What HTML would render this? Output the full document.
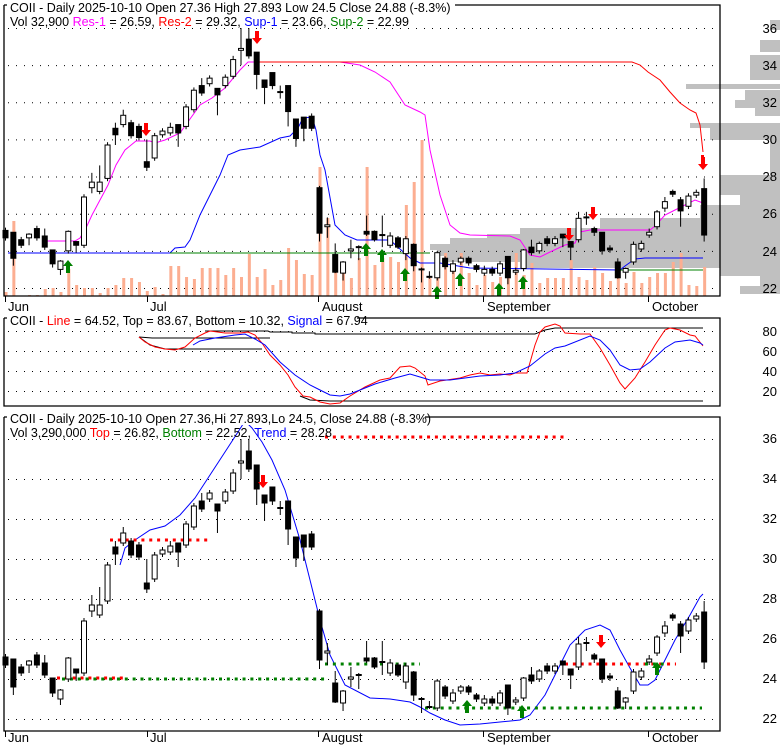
<!DOCTYPE html>
<html><head><meta charset="utf-8">
<style>
html,body{margin:0;padding:0;background:#fff;width:780px;height:745px;overflow:hidden;}
svg{display:block;font-family:"Liberation Sans",Arial,sans-serif;}
</style></head>
<body>
<svg id="s" width="780" height="745" viewBox="0 0 780 745" xmlns="http://www.w3.org/2000/svg">
<rect width="780" height="745" fill="#fff"/>
<g id="vp" fill="#c0c0c0"></g>
<g id="grid" stroke="#000" stroke-width="1" stroke-dasharray="1 7"></g>
<g id="vol" fill="#fcae91"></g>
<g id="lines" fill="none" stroke-width="1"></g>
<g id="c1"></g>
<g id="c3"></g>
<g id="arr"></g>
<g fill="none" stroke="#000" stroke-width="1.3">
<path d="M4 5 V296 H720 V5 H455"/>
<path d="M4 318 V406 H720 V318 H357"/>
<path d="M4 417 V731 H720 V417 H425"/>
<path d="M4 5 H7 M4 318 H7 M4 417 H7"/>
</g>
<g stroke="#000" stroke-width="1">
<path d="M5.5 296V302 M147.5 296V302 M318.5 296V302 M483.5 296V302 M648.5 296V302"/>
<path d="M5.5 731V737 M147.5 731V737 M318.5 731V737 M483.5 731V737 M648.5 731V737"/>
</g>
<g font-size="13" fill="#000">
<text x="8" y="311">Jun</text><text x="150" y="311">Jul</text><text x="322" y="311">August</text><text x="487" y="311">September</text><text x="652" y="311">October</text>
<text x="8" y="742">Jun</text><text x="150" y="742">Jul</text><text x="322" y="742">August</text><text x="487" y="742">September</text><text x="652" y="742">October</text>
</g>
<g font-size="13" fill="#000" text-anchor="end">
<text x="777" y="33">36</text><text x="777" y="70">34</text><text x="777" y="107">32</text><text x="777" y="144">30</text><text x="777" y="181">28</text><text x="777" y="218">26</text><text x="777" y="256">24</text><text x="777" y="293">22</text>
<text x="777" y="336">80</text><text x="777" y="356">60</text><text x="777" y="376">40</text><text x="777" y="396">20</text>
<text x="777" y="443">36</text><text x="777" y="483">34</text><text x="777" y="523">32</text><text x="777" y="563">30</text><text x="777" y="603">28</text><text x="777" y="643">26</text><text x="777" y="683">24</text><text x="777" y="723">22</text>
</g>
<g font-size="12.5">
<rect x="8" y="0" width="446" height="14" fill="#fff"/>
<text x="10" y="12" fill="#000">COII - Daily 2025-10-10 Open 27.36  High 27.893  Low 24.5  Close 24.88 (-8.3%)</text>
<text x="10" y="26" fill="#000">Vol 32,900 <tspan fill="#ff00ff">Res-1</tspan> = 26.59, <tspan fill="#ff0000">Res-2</tspan> = 29.32, <tspan fill="#0000ff">Sup-1</tspan> = 23.66, <tspan fill="#008000">Sup-2</tspan> = 22.99</text>
<rect x="8" y="312" width="348" height="14" fill="#fff"/>
<text x="10" y="325" fill="#000">COII - <tspan fill="#ff0000">Line</tspan> = 64.52, Top = 83.67, Bottom = 10.32, <tspan fill="#0000ff">Signal</tspan> = 67.94</text>
<rect x="8" y="411" width="416" height="14" fill="#fff"/>
<text x="10" y="423" fill="#000">COII - Daily 2025-10-10 Open 27.36,Hi 27.893,Lo 24.5, Close 24.88 (-8.3%)</text>
<text x="10" y="437" fill="#000">Vol 3,290,000 <tspan fill="#ff0000">Top</tspan> = 26.82, <tspan fill="#008000">Bottom</tspan> = 22.52, <tspan fill="#0000ff">Trend</tspan> = 28.28</text>
</g>
</svg>
<script>
var NS="http://www.w3.org/2000/svg";
function el(p,t,a){var e=document.createElementNS(NS,t);for(var k in a)e.setAttribute(k,a[k]);document.getElementById(p).appendChild(e);return e;}
var D=[[25.1,24.7],[25,23.6,25,23.2],[24.6,24.3],[24.7,24.9,24.95,24.3],[25.2,24.7],[24.8,24.2,25.2],[24.05,23.3,24.05,23.1],[23,23.45,23.5,22.7],[24,25.05,25.1],[24.5,24.3,24.5,23.9],
[24.3,26.9],[27.4,27.7,28.2,27.1],[27.2,27.7,28.6],[27.9,29.7],[30.6,30.25,30.9,29.7],[30.8,31.3,31.6],[30.9,30.2],[30.7,30.1],[28.8,28.5,30,28.3],[29,30.2],
[30.25,30.45],[30.35,30.65,30.9],[30.8,30.35,30.8,29.6],[30.7,31.75],[31.6,32.65],[32.9,32.5,33.3],[33,33.3],[32.75,32.4,32.75,31.3],[32.9,33.35],[33.4,34.3,34.5],
[34.8,34.9,36,34],[35.4,34.5,36],[34.7,33.5,34.7,32.7],[33.2,32.8,33.2,31.9],[33.6,32.9,33.6,32.7],[32.55,32.55,32.9,32.2],[32.9,31.5,32.9,30.7],[31.1,30.05,31.1,29.6],[31.2,30.6,31.2,29.9],[31.25,30.6],
[27.4,24.95,27.5,24.5],[25.3,25.4,25.8,24.7],[23.8,22.85,24.4,22.8],[22.8,23.4,23.45,22.4],[24,24.1,24.6,23.6],[24.2,24.2,24.3,23.5],[25.05,24.9,25.9,24.8],[25.05,24.6,25.1,24.5],[24.85,24.85,25.9,24.2],[24.3,24.8,25],
[24.7,24.2,24.8,24.1],[23.85,24.65,24.8,23.5],[24.35,23.2,24.4,22.9],[23,23,23.1,22.3],[22.6,22.6,22.9,22.5],[22.55,23.9,24],[23.6,23.15,23.7],[22.9,23.3,23.5],[23.4,23.6,23.7],[23.6,23.35,23.7],
[23.2,23,23.3],[22.8,23,23.2],[23,22.8],[22.8,23.3],[23.7,22.55,23.7,22.2],[22.85,22.95,23.1],[23.05,24.05,24.1],[24.2,23.9,24.6],[24,24.4,24.5],[24.65,24.4,24.8],
[24.4,24.65,24.8],[24.9,24.7,24.9,24.2],[24.5,24.2,24.5,23.5],[24.6,25.75,26.1],[25.8,25.8,26.1,25.4],[25.2,25,25.3,24.8],[25,24,25,23.8],[24.15,24.05,24.3],[23.4,22.55,23.6,22.5],[22.85,23.05,23.1,22.5],
[23.4,24.35],[24.1,24.4],[24.85,25,25.2],[25.3,26.1,26.2],[26.3,26.65,26.9,26.1],[27.2,27.05,27.3,26.9],[26.75,26.15,26.9,25.3],[26.4,26.95,27.1],[27,27.15,27.3],[27.35,24.85,27.9,24.5]];
var V=[292,221,296,295,295,289,288,292,269,285,288,288,293,288,285,278,278,282,291,287,294,266,266,277,279,268,268,268,275,268,277,254,277,269,285,280,248,260,274,275,
167,218,262,270,278,258,167,265,258,257,262,205,182,140,278,270,253,265,253,273,285,275,282,277,260,253,275,263,283,278,278,278,260,277,280,267,273,281,277,283,272,283,277,273,273,262,253,285,286,267];
function X(i){return 5.5+7.85*i;}
function Y1(p){return 28+(36-p)*18.57;}
function Y3(p){return 439+(36-p)*20;}
[36,34,32,30,28,26,24,22].forEach(function(p){el("grid","line",{x1:8,x2:720,y1:Y1(p)+.5,y2:Y1(p)+.5});el("grid","line",{x1:8,x2:720,y1:Y3(p)+.5,y2:Y3(p)+.5});});
[80,60,40,20].forEach(function(v){var y=411.5-v;el("grid","line",{x1:8,x2:720,y1:y,y2:y});});
var VP=[[770,20,10],[760,40,12],[750,55,25],[686,84,5],[745,90,10],[735,100,8],[755,108,8],[690,123,5],[710,128,12],[770,140,35],[720,175,20],[740,195,10],[700,205,13],[600,218,10],[520,228,6],[487,234,6],[450,238,6],[430,244,6],[437,250,6],[445,256,6],[520,262,6],[720,262,14],[760,276,10],[740,286,8]];
VP.forEach(function(r){el("vp","rect",{x:r[0],y:r[1],width:780-r[0],height:r[2]});});
V.forEach(function(t,i){el("vol","rect",{x:X(i)-1,y:t,width:3,height:296-t});});
function pl(pts,c,w){el("lines","polyline",{points:pts,stroke:c,"stroke-width":w||1});}
pl("45,241 75,241 80,238 86,228 92,215 100,200 108,185 116,165 125,150 136,141 150,141 155,143 165,140 180,133 200,105 212,98 225,88 240,70 248,62 340,62 360,65 375,72 390,82 405,105 420,112 425,115 430,150 440,195 450,225 460,233 470,235 510,236 520,240 530,255 540,257 550,252 565,245 575,243 580,232 590,230 650,230 655,226 665,215 675,210 685,205 695,200 703,203","#ff00ff");
pl("258,62 632,62 640,65 648,72 660,80 670,92 680,103 690,110 696,113 700,125 703,152","#ff0000");
pl("8,253 170,253 175,248 185,247 190,240 200,215 210,195 220,175 228,155 240,150 260,147 280,138 290,136 298,128 303,118 312,117 316,130 320,155 325,170 335,225 345,235 357,240 368,240 390,240 410,258 420,263 440,263 470,268 620,270 625,266 635,259 645,258 703,258","#0000ff");
pl("170,253 430,253","#008000");
pl("620,270 703,270","#008000");
pl("139,337 150,345 165,349 262,349","#000");
pl("139,337 152,338 270,338","#000");
pl("205,331 268,331 270,332 292,332 292,333 315,333 315,334 535,334 545,330 555,328 703,328","#000");
pl("300,396 310,400 330,401 540,401 703,401","#000");
pl("139,337 145,342 155,347 165,349 175,350 185,347 195,338 205,333 210,331 225,333 240,333 248,332 255,335 262,343 270,355 280,365 288,375 295,387 303,396 310,397 320,402 330,404 340,403 350,396 365,387 380,380 390,378 400,367 410,366 415,368 425,376 428,385 440,381 460,378 470,375 480,373 490,375 500,374 510,375 515,373 527,373 535,345 540,332 545,327 555,324 560,326 565,333 580,334 590,334 600,348 610,365 620,383 625,389 635,378 645,362 655,345 665,330 670,328 680,330 690,335 695,336 703,346","#ff0000");
pl("193,345 200,341 215,338 235,335 245,334 255,339 265,345 280,362 295,375 310,385 320,390 330,395 340,396 350,394 360,390 375,384 395,378 410,374 420,377 430,380 450,380 480,376 500,375 515,373 530,366 545,354 555,348 565,346 590,336 600,340 610,350 620,365 630,370 640,369 650,362 665,348 675,342 690,340 700,343 703,345","#0000ff");
pl("120,565 125,548 135,540 150,530 165,526 180,515 195,498 210,475 225,452 238,432 245,421 252,428 262,442 272,460 285,490 300,540 310,580 320,620 330,655 345,685 370,698 390,699 410,702 420,707 430,713 445,720 460,725 480,724 500,722 520,720 530,715 545,695 560,665 570,645 585,630 600,625 610,630 620,650 630,668 640,685 648,685 655,680 665,660 675,640 690,615 700,597 703,594","#0000ff");
function dots(x1,x2,y,c){el("lines","line",{x1:x1,x2:x2,y1:y,y2:y,stroke:c,"stroke-width":3,"stroke-dasharray":"3 4.85"});}
dots(57,125,678,"#ff0000");dots(62,325,679,"#008000");dots(110,212,540,"#ff0000");dots(325,565,437,"#ff0000");
dots(325,420,664,"#008000");dots(425,702,708,"#008000");dots(565,676,664,"#ff0000");dots(645,668,664,"#008000");
function candle(g,i,d,Y){var o=d[0],c=d[1],h=d[2]!=null?d[2]:Math.max(o,c)+0.15,l=d[3]!=null?d[3]:Math.min(o,c)-0.15;var x=X(i);
el(g,"line",{x1:x,x2:x,y1:Y(h),y2:Y(l),stroke:"#000","stroke-width":1});
var t=Y(Math.max(o,c)),b=Y(Math.min(o,c));if(b-t<1.5){el(g,"line",{x1:x-3,x2:x+3,y1:t,y2:t,stroke:"#000","stroke-width":2});return;}
el(g,"rect",{x:x-2.5,y:t,width:5,height:b-t,fill:c<o?"#000":"#fff",stroke:"#000","stroke-width":1});}
D.forEach(function(d,i){candle("c1",i,d,Y1);candle("c3",i,d,Y3);});
function up(x,y){el("arr","path",{d:"M"+x+" "+y+" l-5 6 h3 v7 h4 v-7 h3z",fill:"#008000"});}
function dn(x,y){el("arr","path",{d:"M"+x+" "+y+" l-5 -6 h3 v-7 h4 v7 h3z",fill:"#ff0000"});}
[[68,260],[366,243],[382,249],[405,268],[437,286],[460,273],[499,283],[523,276],[467,700],[522,705],[657,662]].forEach(function(a){up(a[0],a[1]);});
[[146,136],[257,44],[569,241],[593,220],[703,170],[263,488],[601,648]].forEach(function(a){dn(a[0],a[1]);});
el("arr","rect",{x:701,y:155,width:3,height:4,fill:"#ff0000"});
</script>
</body></html>
